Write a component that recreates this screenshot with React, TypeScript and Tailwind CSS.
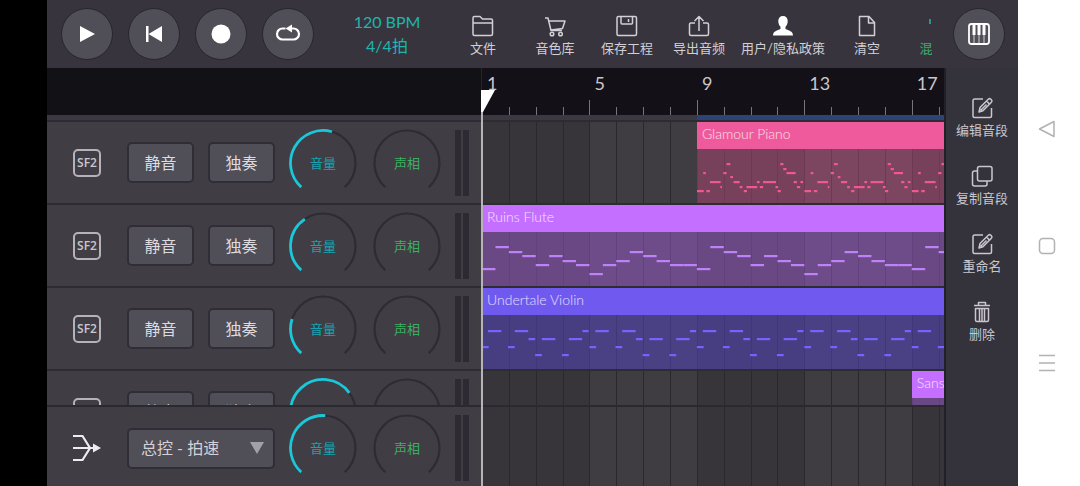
import { ReactNode, useState } from "react";
import clsx from "clsx";

// number of bars visible in the timeline
const BARS = 17.2;
const CELLS = Array.from({ length: 18 }, (_, i) => i);
const toPercent = (bars: number) => `${(bars / BARS) * 100}%`;

type Note = [start: number, length: number, y: number];

type Clip = {
  name: string;
  start: number;
  period: number;
  notes: Note[];
  head: string;
  body: string;
  note: string;
};

type Track = { id: number; volume: number; clip: Clip };

const PIANO: Note[] = [
  [0, 0.25, 42], [0.23, 0.1, 24], [0.35, 0.13, 42], [0.48, 0.4, 33], [0.87, 0.06, 38],
  [0.98, 0.12, 24], [1.1, 0.14, 15], [1.24, 0.1, 28], [1.36, 0.23, 33], [1.59, 0.1, 38],
  [1.74, 0.12, 42], [1.84, 0.4, 38], [2.23, 0.1, 33], [2.34, 0.12, 38], [2.46, 0.48, 33],
  [2.92, 0.1, 38], [3, 0.12, 42], [3.1, 0.12, 15], [3.21, 0.12, 20], [3.33, 0.34, 24],
  [3.6, 0.12, 33], [3.72, 0.12, 38], [3.85, 0.1, 33],
];

const FLUTE: Note[] = [37, 15, 20, 24, 33, 24, 29, 33, 42, 33, 29, 20, 24, 29, 33, 33].map(
  (y, i) => [i / 2, 0.5, y] as Note
);

const VIOLIN: Note[] = [
  [0, 0.25, 32], [0.22, 0.5, 16], [0.97, 0.25, 32], [1.22, 0.5, 16], [1.73, 0.25, 24],
  [1.98, 0.25, 40], [2.23, 0.5, 24], [2.98, 0.25, 40], [3.23, 0.5, 24], [3.74, 0.23, 16],
];

const TRACKS: Track[] = [
  {
    id: 1,
    volume: 16,
    clip: { name: "Glamour Piano", start: 8, period: 4, notes: PIANO, head: "bg-[#ef5a9c]", body: "bg-[#ef5a9c]/35", note: "#f0588f" },
  },
  {
    id: 2,
    volume: -34,
    clip: { name: "Ruins Flute", start: 0, period: 8, notes: FLUTE, head: "bg-[#c46fff]", body: "bg-[#a95fe0]/45", note: "#bd82f7" },
  },
  {
    id: 3,
    volume: -72,
    clip: { name: "Undertale Violin", start: 0, period: 4, notes: VIOLIN, head: "bg-[#7059ef]", body: "bg-[#5546c8]/50", note: "#7563fb" },
  },
  {
    id: 4,
    volume: 54,
    clip: { name: "Sans", start: 16, period: 4, notes: [], head: "bg-[#c46fff]", body: "bg-[#a95fe0]/45", note: "#bd82f7" },
  },
];

const Icon = ({ children, className }: { children: ReactNode; className?: string }) => (
  <svg
    viewBox="0 0 24 24"
    fill="none"
    stroke="currentColor"
    strokeWidth="1.5"
    strokeLinejoin="round"
    className={clsx("size-6 shrink-0", className)}
    aria-hidden
  >
    {children}
  </svg>
);

const EditIcon = () => (
  <Icon>
    <path d="M13 3H4.5A1.5 1.5 0 0 0 3 4.500V20a1.500 1.500 0 0 0 1.500 1.500H20a1.500 1.500 0 0 0 1.500-1.500V12" />
    <path d="m9 16 1-4.500L18.300 3.200a1.800 1.800 0 0 1 2.500 0l.6.6a1.800 1.800 0 0 1 0 2.500L13 14.800zM16.500 5l3.100 3.100M10.500 14.500l6-6" />
  </Icon>
);

const MENU = [
  {
    label: "文件",
    icon: (
      <Icon>
        <path d="M2 20V4a1.500 1.500 0 0 1 1.500-1.500H9L11.500 5H20a1.500 1.500 0 0 1 1.500 1.500V20a1.500 1.500 0 0 1-1.500 1.500H3.500A1.500 1.500 0 0 1 2 20zM2 9h19.500" />
      </Icon>
    ),
  },
  {
    label: "音色库",
    icon: (
      <Icon>
        <path d="M2 4h3l3 12.500h11M6 7h16l-2.500 7.500L8 16" />
        <circle cx="9" cy="20" r="1.800" />
        <circle cx="17.500" cy="20" r="1.800" />
      </Icon>
    ),
  },
  {
    label: "保存工程",
    icon: (
      <Icon>
        <rect x="2" y="2.500" width="19.500" height="19" rx="1.500" />
        <path d="M6 2.500v6.500a1 1 0 0 0 1 1h9.500a1 1 0 0 0 1-1V2.500M13.500 5v3" />
      </Icon>
    ),
  },
  {
    label: "导出音频",
    icon: (
      <Icon>
        <path d="M8 9H4a1.500 1.500 0 0 0-1.500 1.500V20A1.500 1.500 0 0 0 4 21.500h16a1.500 1.500 0 0 0 1.500-1.500v-9.500A1.500 1.500 0 0 0 20 9h-4M12 17V3M7.500 7 12 2.500 16.500 7" />
      </Icon>
    ),
  },
  {
    label: "用户/隐私政策",
    wide: true,
    icon: (
      <Icon>
        <path
          d="M12 2c-3 0-4.700 2-4.700 5 0 2.500.8 4.500 2.200 5.800V15c-3 1.500-7.500 2-7.500 6.500h20c0-4.500-4.500-5-7.500-6.500v-2.200c1.400-1.300 2.200-3.300 2.200-5.800 0-3-1.700-5-4.700-5z"
          fill="#fff"
          stroke="none"
        />
      </Icon>
    ),
  },
  {
    label: "清空",
    icon: (
      <Icon>
        <path d="M4.500 2.500H14l5.500 6v13h-15zM13.500 2.500V9h6" />
      </Icon>
    ),
  },
  {
    label: "混音器",
    green: true,
    icon: (
      <Icon className="text-[#1fb5ad]">
        <path d="M3 5v5M12 3v10M12 17v4M21 3v3M21 10v11" />
      </Icon>
    ),
  },
];

const ACTIONS = [
  { label: "编辑音段", icon: <EditIcon /> },
  {
    label: "复制音段",
    icon: (
      <Icon>
        <rect x="7.500" y="2.500" width="14.500" height="14.500" rx="2" />
        <path d="M7.500 7H4.500A2 2 0 0 0 2.500 9v11a2 2 0 0 0 2 2H15a2 2 0 0 0 2-2v-3" />
      </Icon>
    ),
  },
  { label: "重命名", icon: <EditIcon /> },
  {
    label: "删除",
    icon: (
      <Icon>
        <path d="M4 5.500h16M8.500 5.500V2.500h7v3M5.500 8.500h13V20a1.500 1.500 0 0 1-1.500 1.500H7A1.500 1.500 0 0 1 5.500 20zM9.500 9v12M12 9v12M14.500 9v12" />
      </Icon>
    ),
  },
];

const RoundButton = ({ label, children }: { label: string; children: ReactNode }) => (
  <button
    aria-label={label}
    className="flex size-[52px] shrink-0 items-center justify-center rounded-full border border-[#28252f] bg-[#504e56] text-white"
  >
    <svg viewBox="0 0 26 26" className="size-[26px]" fill="currentColor" aria-hidden>
      {children}
    </svg>
  </button>
);

const Header = () => (
  <header className="flex h-[68px] shrink-0 items-center bg-[#37343d] pr-3 pl-[14px]">
    <div className="flex shrink-0 gap-[15px]">
      <RoundButton label="播放">
        <path d="M6 5v16l15-8z" />
      </RoundButton>
      <RoundButton label="回到开头">
        <path d="M5 5h2.500v16H5zM21 5v16L7.500 13z" />
      </RoundButton>
      <RoundButton label="录音">
        <circle cx="13" cy="13" r="9.500" />
      </RoundButton>
      <RoundButton label="循环">
        <path
          d="M10.500 7.500H7.500a5.500 5.500 0 0 0 0 11h11a5.500 5.500 0 0 0 0-11h-2"
          fill="none"
          stroke="currentColor"
          strokeWidth="2.200"
        />
        <path d="M10.500 7.500 17 3.500v8z" />
      </RoundButton>
    </div>
    <div className="ml-[13px] w-[120px] shrink-0 text-center text-base leading-6 text-[#1fb5ad]">
      <p>120 BPM</p>
      <p>4/4拍</p>
    </div>
    <nav className="flex min-w-0 flex-1 overflow-hidden pt-1">
      {MENU.map((item) => (
        <button
          key={item.label}
          className={clsx(
            "flex shrink-0 flex-col items-center text-[13px] leading-5 whitespace-nowrap",
            item.wide ? "w-24" : "w-[72px]",
            item.green ? "text-[#3cae6a]" : "text-[#d2d0d6]"
          )}
        >
          {item.icon}
          {item.label}
        </button>
      ))}
    </nav>
  </header>
);

const Ruler = () => (
  <div className="flex h-[47px] shrink-0 bg-[#121116]">
    <div className="w-[435px] shrink-0 border-r border-[#25242a]" />
    <div className="flex min-w-0 flex-1 overflow-hidden bg-[#141017]">
      {CELLS.map((i) => (
        <div
          key={i}
          className="flex shrink-0 flex-col justify-between"
          style={{ width: toPercent(1) }}
        >
          <span className="w-0 pt-[3px] pl-[5px] text-lg leading-6 text-[#c9c7cc]">
            {i % 4 === 0 && i + 1}
          </span>
          <span className={clsx("w-px bg-[#77757b]", i % 4 === 0 ? "h-[15px]" : "h-2", i === 0 && "invisible")} />
        </div>
      ))}
    </div>
  </div>
);

const polar = (deg: number) => {
  const rad = (deg * Math.PI) / 180;
  return `${(35 + 32.5 * Math.sin(rad)).toFixed(2)} ${(35 - 32.5 * Math.cos(rad)).toFixed(2)}`;
};

// arc from the lower left stop to the given angle, 0 is straight up
const arc = (to: number) => `M${polar(-138)}A32.5 32.5 0 ${to + 138 > 180 ? 1 : 0} 1 ${polar(to)}`;

const Knob = ({ label, value, active }: { label: string; value: number; active?: boolean }) => {
  const [angle, setAngle] = useState(value);

  return (
    <label className="relative flex size-[70px] shrink-0 items-center justify-center">
      <svg viewBox="0 0 70 70" className="absolute inset-0" fill="none" aria-hidden>
        <path d={arc(138)} stroke="#2e2b35" strokeWidth="2.200" />
        {active && <path d={arc(angle)} stroke="#1ac8da" strokeWidth="2.800" />}
      </svg>
      <span className={clsx("text-[13px] leading-5", active ? "text-[#16a3b0]" : "text-[#3cb061]")}>
        {label}
      </span>
      <input
        type="range"
        min={-138}
        max={138}
        value={angle}
        onChange={(e) => setAngle(Number(e.target.value))}
        className="absolute inset-0 size-full opacity-0"
      />
    </label>
  );
};

const Mixer = ({ volume }: { volume: number }) => (
  <>
    <div className="ml-[13px] flex shrink-0 gap-[14px]">
      <Knob label="音量" value={volume} active />
      <Knob label="声相" value={0} />
    </div>
    <div className="ml-[13px] flex h-[66px] shrink-0 gap-0.5">
      <div className="w-1.5 bg-[#2d2a34]" />
      <div className="w-1.5 bg-[#2d2a34]" />
    </div>
  </>
);

const TrackButton = ({ children }: { children: ReactNode }) => (
  <button className="h-[41px] w-[67px] rounded-[5px] border-2 border-[#302d37] bg-[#504e57] text-base leading-5 text-[#dddbe0]">
    {children}
  </button>
);

const Grid = ({ children }: { children?: ReactNode }) => (
  <div className="relative min-w-0 flex-1 overflow-hidden">
    <div className="flex h-full">
      {CELLS.map((i) => (
        <div
          key={i}
          className={clsx(
            "h-full shrink-0 border-l border-[#2a282d]",
            i % 8 < 4 ? "bg-[#38353a]" : "bg-[#3f3d42]"
          )}
          style={{ width: toPercent(1) }}
        />
      ))}
    </div>
    {children}
  </div>
);

const ClipView = ({ clip }: { clip: Clip }) => {
  const length = BARS - clip.start;
  const repeats = Array.from({ length: Math.ceil(length / clip.period) }, (_, i) => i);

  return (
    <div
      className="absolute inset-y-0 right-0 flex flex-col overflow-hidden"
      style={{ left: toPercent(clip.start) }}
    >
      <p className={clsx("h-[27px] shrink-0 pl-[5px] text-sm leading-6 font-light whitespace-nowrap text-white/80", clip.head)}>
        {clip.name}
      </p>
      <svg
        viewBox={`0 0 ${length} 54`}
        preserveAspectRatio="none"
        className={clsx("min-h-0 w-full flex-1", clip.body)}
        aria-hidden
      >
        {repeats.map((r) =>
          clip.notes.map(([start, len, y], i) => (
            <rect key={`${r}-${i}`} x={r * clip.period + start} y={y - 1} width={len} height="2.200" fill={clip.note} />
          ))
        )}
      </svg>
    </div>
  );
};

const TrackRow = ({ track }: { track: Track }) => (
  <div className="flex h-[83px] shrink-0 border-b-2 border-[#2e2c33]">
    <div className="flex w-[435px] shrink-0 items-center bg-[#403d45] pl-[26px]">
      <div className="flex size-7 shrink-0 items-center justify-center rounded-[5px] border-2 border-[#b5b3b9] font-['Open_Sans'] text-xs leading-4 font-semibold text-[#c9c7cd]">
        SF2
      </div>
      <div className="ml-[26px] flex shrink-0 gap-[14px]">
        <TrackButton>静音</TrackButton>
        <TrackButton>独奏</TrackButton>
      </div>
      <Mixer volume={track.volume} />
    </div>
    <Grid>
      <ClipView clip={track.clip} />
    </Grid>
  </div>
);

const MasterRow = () => (
  <div className="flex h-[81px] shrink-0 border-t-2 border-[#2b2930]">
    <div className="flex w-[435px] shrink-0 items-center bg-[#403d45] pt-[3px] pl-[26px]">
      <svg viewBox="0 0 28 28" className="size-7 shrink-0" fill="none" stroke="#eeecf0" strokeWidth="2.200" aria-hidden>
        <path d="M0 2h9.500L17 14 9.500 26H0M0 14h22" />
        <path d="M20 9.500v9l8-4.500z" fill="#eeecf0" stroke="none" />
      </svg>
      <div className="relative ml-[26px] shrink-0">
        <select
          aria-label="总控"
          className="block h-[41px] w-[148px] appearance-none rounded-[5px] border-2 border-[#302d37] bg-[#504e57] pl-3 text-base leading-5 text-[#d4d2d8]"
        >
          <option>总控 - 拍速</option>
        </select>
        <svg viewBox="0 0 14 12" className="pointer-events-none absolute top-[14px] right-[11px] h-3 w-3.5" fill="#a3a1a8" aria-hidden>
          <path d="M0 0h14L7 12z" />
        </svg>
      </div>
      <Mixer volume={4} />
    </div>
    <Grid />
  </div>
);

const Playhead = () => (
  <div className="pointer-events-none absolute top-[22px] bottom-0 left-[434px]">
    <svg viewBox="0 0 14 22" className="h-[22px] w-3.5" fill="#fff" aria-hidden>
      <path d="M0 0h14L2 22H0z" />
    </svg>
    <div className="h-full w-0.5 bg-[#b6b4b9]" />
  </div>
);

const SideBar = () => (
  <aside className="flex w-[74px] shrink-0 flex-col bg-[#34323b]">
    <div className="flex h-[68px] shrink-0 items-center justify-center bg-[#37343d] pr-1">
      <RoundButton label="键盘">
        <rect x="3" y="3" width="20" height="20" rx="2.500" fill="none" stroke="currentColor" strokeWidth="1.800" />
        <path d="M6.500 4h3v10h-3zM11.500 4h3v10h-3zM16.500 4h3v10h-3z" />
        <path d="M8 14v8M13 14v8M18 14v8" stroke="#bdbbc2" strokeWidth="1.200" />
      </RoundButton>
    </div>
    <div className="flex flex-1 flex-col gap-6 border-l-2 border-[#211f28] pt-7">
      {ACTIONS.map((item) => (
        <button
          key={item.label}
          className="flex flex-col items-center text-[13px] leading-5 whitespace-nowrap text-[#c9c7ce]"
        >
          {item.icon}
          {item.label}
        </button>
      ))}
    </div>
  </aside>
);

const SystemNav = () => (
  <nav className="flex w-[62px] shrink-0 flex-col items-center justify-center gap-[99px] bg-white pt-1.5 pr-1 text-[#b3b1b3]">
    <button aria-label="返回">
      <svg viewBox="0 0 18 18" className="size-[18px]" fill="none" stroke="currentColor" strokeWidth="1.500" strokeLinejoin="round" aria-hidden>
        <path d="M1.500 9 16 1.500v15z" />
      </svg>
    </button>
    <button aria-label="主页">
      <svg viewBox="0 0 18 18" className="size-[18px]" fill="none" stroke="currentColor" strokeWidth="1.500" aria-hidden>
        <rect x="1.500" y="1.500" width="15" height="15" rx="3.500" />
      </svg>
    </button>
    <button aria-label="最近任务">
      <svg viewBox="0 0 18 18" className="size-[18px]" fill="none" stroke="currentColor" strokeWidth="1.500" aria-hidden>
        <path d="M1 1.500h16M1 9h16M1 16.500h16" />
      </svg>
    </button>
  </nav>
);

const App = () => {
  return (
    <div className="flex h-screen bg-black font-['Lato','Noto_Sans_CJK_SC',sans-serif]">
      <div className="w-[47px] shrink-0" />
      <main className="flex min-w-0 flex-1 flex-col">
        <Header />
        <div className="relative flex min-h-0 flex-1 flex-col overflow-hidden">
          <Ruler />
          <div className="flex h-[7px] shrink-0 border-b-2 border-[#2e2c33] bg-[#3b3842]">
            <div className="w-[435px] shrink-0" />
            <div className="flex min-w-0 flex-1 justify-end">
              <div className="bg-[#2b4375]" style={{ width: toPercent(BARS - 8) }} />
            </div>
          </div>
          <div className="flex min-h-0 flex-1 flex-col overflow-hidden">
            {TRACKS.map((track) => (
              <TrackRow key={track.id} track={track} />
            ))}
          </div>
          <MasterRow />
          <Playhead />
        </div>
      </main>
      <SideBar />
      <SystemNav />
    </div>
  );
};

export default App;
